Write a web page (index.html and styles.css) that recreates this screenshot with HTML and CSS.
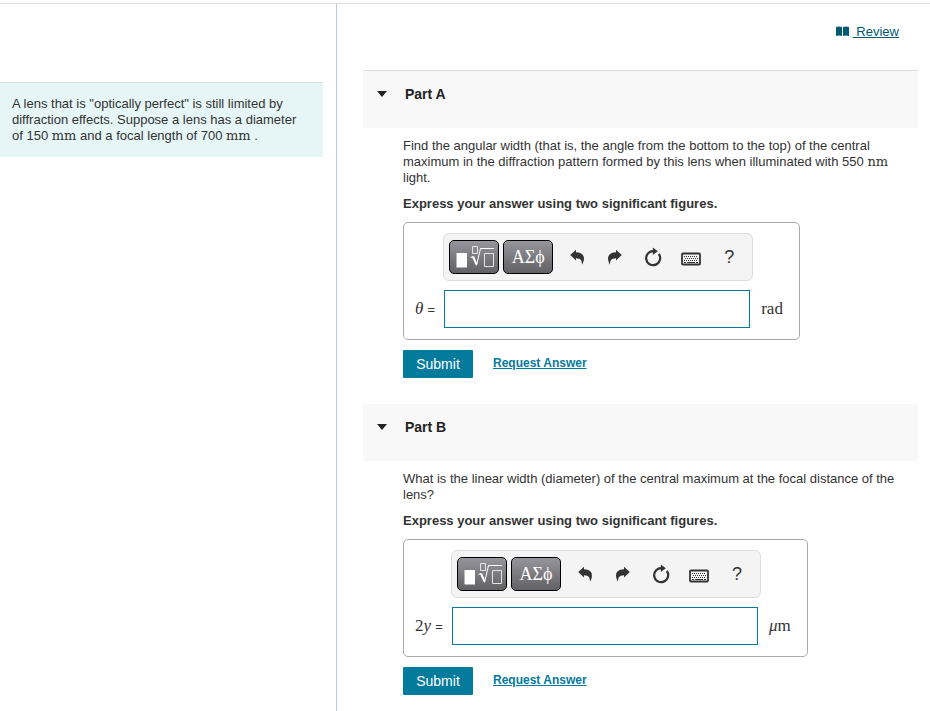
FILE: index.html
```html
<!DOCTYPE html>
<html lang="en">
<head>
  <meta charset="UTF-8">
  <meta name="viewport" content="width=device-width, initial-scale=1.0">
  <title>Diffraction by a Lens</title>
  <link rel="stylesheet" href="styles.css">
</head>
<body>

  <!-- Icons shared by both toolbars -->
  <svg class="icon-defs" aria-hidden="true">
    <symbol id="icon-template" viewBox="0 0 40 26">
      <path d="M2.500 9h10.500v14.500H2.500z" fill="#fff"/>
      <path d="M18.500 2.500h5v7h-5zM30.500 9.500h9v13h-9z" fill="none" stroke="#e4e4e6"/>
      <path d="M16.500 13.500l2.500-1" fill="none" stroke="#fff"/>
      <path d="M19 12.500l3.500 8" fill="none" stroke="#fff" stroke-width="2"/>
      <path d="M22.500 21.500l4-17h13.500" fill="none" stroke="#fff"/>
    </symbol>
    <symbol id="icon-undo" viewBox="0 0 16 16">
      <path d="M1.200 6L7 .7v2.600c5.500 0 8.500 3 7.900 7.200-.2 2-.9 3.700-1.900 5.200 0-4.200-1-6.200-6-6.500v2.300z"/>
    </symbol>
    <symbol id="icon-reset" viewBox="0 0 18 20">
      <path d="M10 4.200A7 7 0 1 0 14.800 7" fill="none" stroke="#333" stroke-width="2.200"/>
      <path d="M8.800.5l5 3.700-5 3.800z"/>
    </symbol>
    <symbol id="icon-keyboard" viewBox="0 0 20 14">
      <rect x="1" y="1.500" width="18" height="11" rx="1" fill="none" stroke="#333" stroke-width="1.800"/>
      <path d="M3 4.500h14M4 6.500h13M3 8.500h14" stroke="#333" stroke-dasharray="1 1"/>
      <path d="M3 10.500h2M6 10.500h8M15 10.500h2" stroke="#333"/>
    </symbol>
  </svg>

  <div class="page">
    <aside class="sidebar">
      <div class="problem-intro">
        A lens that is "optically perfect" is still limited by diffraction effects. Suppose a lens has a diameter of 150 <span class="math">mm</span> and a focal length of 700 <span class="math">mm</span> .
      </div>
    </aside>

    <main class="content">
      <div class="review">
        <a href="#" class="review-link"><svg class="book" viewBox="0 0 13 11" aria-hidden="true"><path d="M0 1q3-1 6 0v9q-3-1-6 0zM7 1q3-1 6 0v9q-3-1-6 0z"/></svg><span class="review-text">&nbsp;Review</span></a>
      </div>

      <section class="part">
        <h2 class="part-header first"><span class="arrow"></span>Part A</h2>
        <form class="part-body">
          <p>Find the angular width (that is, the angle from the bottom to the top) of the central maximum in the diffraction pattern formed by this lens when illuminated with 550 <span class="math">nm</span> light.</p>
          <p class="instructions">Express your answer using two significant figures.</p>
          <div class="answer-box">
            <div class="toolbar">
              <button type="button" class="dark-btn" aria-label="Templates"><svg class="template"><use href="#icon-template"/></svg></button>
              <button type="button" class="dark-btn">ΑΣϕ</button>
              <button type="button" class="tool" aria-label="Undo"><svg class="undo"><use href="#icon-undo"/></svg></button>
              <button type="button" class="tool" aria-label="Redo"><svg class="undo redo"><use href="#icon-undo"/></svg></button>
              <button type="button" class="tool" aria-label="Reset"><svg class="reset"><use href="#icon-reset"/></svg></button>
              <button type="button" class="tool" aria-label="Keyboard"><svg class="keyboard"><use href="#icon-keyboard"/></svg></button>
              <button type="button" class="tool">?</button>
            </div>
            <label for="answerA"><i>θ</i> <span class="equals">=</span></label>
            <input type="text" id="answerA" name="answerA">
            <span class="unit">rad</span>
          </div>
          <div class="actions">
            <button type="submit" class="submit">Submit</button>
            <a href="#" class="request">Request Answer</a>
          </div>
        </form>
      </section>

      <section class="part">
        <h2 class="part-header"><span class="arrow"></span>Part B</h2>
        <form class="part-body">
          <p>What is the linear width (diameter) of the central maximum at the focal distance of the lens?</p>
          <p class="instructions">Express your answer using two significant figures.</p>
          <div class="answer-box">
            <div class="toolbar">
              <button type="button" class="dark-btn" aria-label="Templates"><svg class="template"><use href="#icon-template"/></svg></button>
              <button type="button" class="dark-btn">ΑΣϕ</button>
              <button type="button" class="tool" aria-label="Undo"><svg class="undo"><use href="#icon-undo"/></svg></button>
              <button type="button" class="tool" aria-label="Redo"><svg class="undo redo"><use href="#icon-undo"/></svg></button>
              <button type="button" class="tool" aria-label="Reset"><svg class="reset"><use href="#icon-reset"/></svg></button>
              <button type="button" class="tool" aria-label="Keyboard"><svg class="keyboard"><use href="#icon-keyboard"/></svg></button>
              <button type="button" class="tool">?</button>
            </div>
            <label for="answerB">2<i>y</i> <span class="equals">=</span></label>
            <input type="text" id="answerB" name="answerB">
            <span class="unit"><i>μ</i>m</span>
          </div>
          <div class="actions">
            <button type="submit" class="submit">Submit</button>
            <a href="#" class="request">Request Answer</a>
          </div>
        </form>
      </section>
    </main>
  </div>

</body>
</html>
```

FILE: styles.css
```css
* {
  margin: 0;
  padding: 0;
  box-sizing: border-box;
}

body {
  font-family: "Liberation Sans", Arial, sans-serif;
  font-size: 13px;
  line-height: 16px;
  color: #333;
  background-color: #fff;
  padding-top: 3px;
}

.icon-defs {
  display: none;
}

.page {
  display: flex;
  min-height: calc(100vh - 3px);
  border-top: 1px solid #ddd;
}

.sidebar {
  flex: 0 0 337px;
  padding: 78px 13px 0 0;
  border-right: 1px solid #b5cce2;
}

.problem-intro {
  padding: 13px 20px 13px 12px;
  border-top: 1px solid #ddd;
  background-color: #e6f6f6;
}

.math {
  font-family: "DejaVu Serif", serif;
  font-size: 13px;
}

.content {
  flex: 1;
  min-width: 0;
  padding: 0 12px 16px 26px;
}

.review {
  height: 66px;
  padding: 20px 19px 0 0;
  text-align: right;
}

.review-link {
  color: #005a70;
  text-decoration: none;
}

.review-text {
  margin-left: 4px;
  text-decoration: underline;
}

.book {
  width: 13px;
  height: 11px;
  vertical-align: -1px;
  fill: #005a70;
}

.part {
  margin-bottom: 26px;
}

.part-header {
  display: flex;
  gap: 18px;
  height: 57px;
  padding: 15px 14px;
  background-color: #f8f8f8;
  color: #222;
  font-size: 14px;
}

.part-header.first {
  height: 58px;
  border-top: 1px solid #ddd;
}

.arrow {
  margin-top: 5px;
  width: 10px;
  height: 6px;
  background-color: #222;
  clip-path: polygon(0 0, 100% 0, 50% 100%);
}

.part-body {
  padding: 10px 18px 0 40px;
}

.part-body p {
  margin-bottom: 10px;
}

.part-body .instructions {
  font-weight: bold;
}

.answer-box {
  display: inline-grid;
  grid-template-columns: auto 310px auto;
  align-items: center;
  row-gap: 9px;
  padding: 10px 16px 11px 11px;
  border: 1px solid #aaa;
  border-radius: 5px;
  vertical-align: top;
}

.toolbar {
  grid-column: 2;
  display: flex;
  align-items: center;
  height: 48px;
  padding-left: 5px;
  border: 1px solid #ddd;
  border-radius: 6px;
  background-color: #f4f4f4;
}

.dark-btn {
  display: flex;
  align-items: center;
  justify-content: center;
  width: 50px;
  height: 34px;
  margin-right: 4px;
  border: 1px solid #000;
  border-radius: 5px;
  background: linear-gradient(#95959c, #626264);
  color: #fff;
  font-family: "Liberation Serif", "Times New Roman", serif;
  font-size: 18px;
}

.template {
  flex: none;
  width: 40px;
  height: 26px;
}

.tool {
  display: flex;
  align-items: center;
  justify-content: center;
  width: 38px;
  height: 34px;
  border: none;
  background: none;
  color: #333;
  fill: #333;
  font-family: "Liberation Sans", Arial, sans-serif;
  font-size: 18px;
}

.dark-btn + .tool {
  margin-left: 1px;
}

.undo {
  width: 16px;
  height: 16px;
}

.redo {
  transform: scaleX(-1);
}

.reset {
  width: 18px;
  height: 20px;
}

.keyboard {
  width: 20px;
  height: 14px;
  margin-top: 4px;
}

.answer-box label {
  grid-column: 1;
  padding-right: 8px;
  font-family: "Liberation Serif", "Times New Roman", serif;
  font-size: 17px;
}

.equals {
  font-family: "Liberation Sans", Arial, sans-serif;
  font-size: 13px;
}

.answer-box input {
  width: 306px;
  height: 38px;
  margin-left: 1px;
  padding: 0 8px;
  border: 1px solid #047a9c;
  font-size: 16px;
}

.unit {
  padding-left: 8px;
  font-family: "Liberation Serif", "Times New Roman", serif;
  font-size: 17px;
}

.actions {
  display: flex;
  align-items: center;
  gap: 20px;
  margin-top: 10px;
}

.submit {
  width: 70px;
  height: 28px;
  border: none;
  border-radius: 1px;
  background-color: #047a9c;
  color: #fff;
  font-family: "Liberation Sans", Arial, sans-serif;
  font-size: 14px;
}

.request {
  padding-bottom: 2px;
  color: #047a9c;
  font-size: 12px;
  font-weight: bold;
}
```
